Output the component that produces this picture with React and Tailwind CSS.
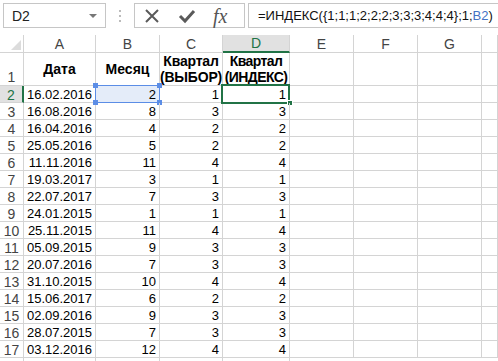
const rows = [
  ['16.02.2016', 2, 1, 1],
  ['16.08.2016', 8, 3, 3],
  ['16.04.2016', 4, 2, 2],
  ['25.05.2016', 5, 2, 2],
  ['11.11.2016', 11, 4, 4],
  ['19.03.2017', 3, 1, 1],
  ['22.07.2017', 7, 3, 3],
  ['24.01.2015', 1, 1, 1],
  ['25.11.2015', 11, 4, 4],
  ['05.09.2015', 9, 3, 3],
  ['20.07.2016', 7, 3, 3],
  ['31.10.2015', 10, 4, 4],
  ['15.06.2017', 6, 2, 2],
  ['02.09.2016', 9, 3, 3],
  ['28.07.2015', 7, 3, 3],
  ['03.12.2016', 12, 4, 4],
];

const letters = ['A', 'B', 'C', 'D', 'E', 'F', 'G'];
const widths = ['w-[72px]', 'w-[64px]', 'w-[63px]', 'w-[67px]', 'w-[64px]', 'w-[64px]', 'w-[64px]'];

const line = 'border-r border-b border-[#d4d4d4]';

const Toolbar = () => (
  <div className="flex h-[35px] items-start pt-[3px] pl-[3px]">
    <div className="relative flex h-[25px] w-[103px] items-center border border-[#c6c6c6] pl-[8px] text-[14px] text-[#222]">
      D2
      <div className="absolute right-[8px] top-[10px] h-0 w-0 border-x-[4px] border-t-[4px] border-x-transparent border-t-[#777]" />
    </div>
    <div className="ml-[13px] mt-[7px] flex flex-col gap-[3px]">
      <div className="h-[2px] w-[2px] bg-[#bbb]" />
      <div className="h-[2px] w-[2px] bg-[#bbb]" />
      <div className="h-[2px] w-[2px] bg-[#bbb]" />
    </div>
    <div className="ml-[13px] flex h-[25px] w-[111px] items-center border border-[#c6c6c6]">
      <svg className="ml-[9px]" width="16" height="16" viewBox="0 0 16 16">
        <path d="M2 2 L14 14 M14 2 L2 14" stroke="#5a5a5a" strokeWidth="2" />
      </svg>
      <svg className="ml-[18px]" width="18" height="16" viewBox="0 0 18 16">
        <path d="M2 8 L7 13 L16 3" stroke="#5a5a5a" strokeWidth="3" fill="none" />
      </svg>
      <span className="ml-[17px] font-['Liberation_Serif',serif] text-[20px] italic leading-[20px] text-[#555]">fx</span>
    </div>
    <div className="ml-[3px] flex h-[25px] flex-1 items-center border border-r-0 border-[#c6c6c6] pl-[9px] font-['Liberation_Sans',sans-serif] text-[13px] text-[#111]">
      =ИНДЕКС({'{'}1;1;1;2;2;2;3;3;3;4;4;4{'}'};1;<span className="text-[#4472c4]">B2</span>)
    </div>
  </div>
);

const HeaderRow = () => (
  <div className="flex h-[18px] text-[14px]">
    <div className={`relative w-[24px] ${line}`}>
      <svg className="absolute bottom-[2px] right-[2px]" width="10" height="10" viewBox="0 0 10 10">
        <path d="M10 0 L10 10 L0 10 Z" fill="#dcdcdc" />
      </svg>
    </div>
    {letters.map((l, i) =>
      l === 'D' ? (
        <div key={l} className={`${widths[i]} flex items-center justify-center border-r border-[#d4d4d4] border-b-2 border-b-[#217346] bg-[#e1e1e1] text-[#217346]`}>
          {l}
        </div>
      ) : (
        <div key={l} className={`${widths[i]} flex items-center justify-center ${line} text-[#444]`}>
          {l}
        </div>
      )
    )}
    <div className={`flex-1 ${line}`} />
  </div>
);

const Row1 = () => (
  <div className="flex h-[33px]">
    <div className={`flex w-[24px] items-end justify-center text-[14px] text-[#444] ${line}`}>1</div>
    <div className={`flex w-[72px] items-center justify-center text-[14px] font-bold ${line}`}>Дата</div>
    <div className={`flex w-[64px] items-center justify-center text-[14px] font-bold ${line}`}>Месяц</div>
    <div className={`flex w-[63px] flex-col items-center justify-center text-[14px] font-bold leading-[16px] tracking-[-0.2px] ${line}`}>
      <span>Квартал</span>
      <span>(ВЫБОР)</span>
    </div>
    <div className={`flex w-[67px] flex-col items-center justify-center text-[14px] font-bold leading-[16px] tracking-[-0.6px] ${line}`}>
      <span>Квартал</span>
      <span>(ИНДЕКС)</span>
    </div>
    <div className={`w-[64px] ${line}`} />
    <div className={`w-[64px] ${line}`} />
    <div className={`w-[64px] ${line}`} />
    <div className={`flex-1 ${line}`} />
  </div>
);

const DataRow = ({ n, r }) => {
  const active = n === 2;
  return (
    <div className="flex h-[17px] leading-[14px]">
      {active ? (
        <div className="flex w-[24px] items-end justify-center border-r-2 border-b border-r-[#217346] border-b-[#d4d4d4] bg-[#e1e1e1] text-[14px] text-[#217346]">{n}</div>
      ) : (
        <div className={`flex w-[24px] items-end justify-center text-[14px] text-[#444] ${line}`}>{n}</div>
      )}
      <div className={`flex w-[72px] items-end justify-end pr-[3px] ${line}`}>{r[0]}</div>
      <div className={`relative flex w-[64px] items-end justify-end pr-[3px] ${line} ${active ? 'bg-[#e4ecf9]' : ''}`}>
        {active && (
          <>
            <div className="absolute -left-[1px] -top-[1px] h-[18px] w-[65px] border border-[#5b8de6]" />
            <div className="absolute -left-[3px] -top-[3px] h-[5px] w-[5px] bg-[#5b8de6]" />
            <div className="absolute -right-[3px] -top-[3px] h-[5px] w-[5px] bg-[#5b8de6]" />
            <div className="absolute -left-[3px] -bottom-[3px] h-[5px] w-[5px] bg-[#5b8de6]" />
            <div className="absolute -right-[3px] -bottom-[3px] h-[5px] w-[5px] bg-[#5b8de6]" />
          </>
        )}
        <span className="relative">{r[1]}</span>
      </div>
      <div className={`flex w-[63px] items-end justify-end pr-[3px] ${line}`}>{r[2]}</div>
      <div className={`relative flex w-[67px] items-end justify-end pr-[3px] ${line}`}>
        {active && (
          <>
            <div className="absolute -left-[2px] -top-[2px] h-[20px] w-[69px] border-2 border-[#217346]" />
            <div className="absolute -right-[4px] -bottom-[4px] h-[6px] w-[6px] border border-white bg-[#217346]" />
          </>
        )}
        <span className="relative">{r[3]}</span>
      </div>
      <div className={`w-[64px] ${line}`} />
      <div className={`w-[64px] ${line}`} />
      <div className={`w-[64px] ${line}`} />
      <div className={`flex-1 ${line}`} />
    </div>
  );
};

export default function App() {
  return (
    <div className="h-[361px] w-[498px] overflow-hidden bg-white font-['Liberation_Sans',Arial,sans-serif] text-[13px] leading-[16px] text-black">
      <Toolbar />
      <HeaderRow />
      <Row1 />
      {rows.map((r, i) => (
        <DataRow key={i} n={i + 2} r={r} />
      ))}
      <div className="flex h-[10px]">
        <div className="w-[24px] border-r border-[#d4d4d4]" />
        <div className="w-[72px] border-r border-[#d4d4d4]" />
        <div className="w-[64px] border-r border-[#d4d4d4]" />
        <div className="w-[63px] border-r border-[#d4d4d4]" />
        <div className="w-[67px] border-r border-[#d4d4d4]" />
      </div>
    </div>
  );
}
